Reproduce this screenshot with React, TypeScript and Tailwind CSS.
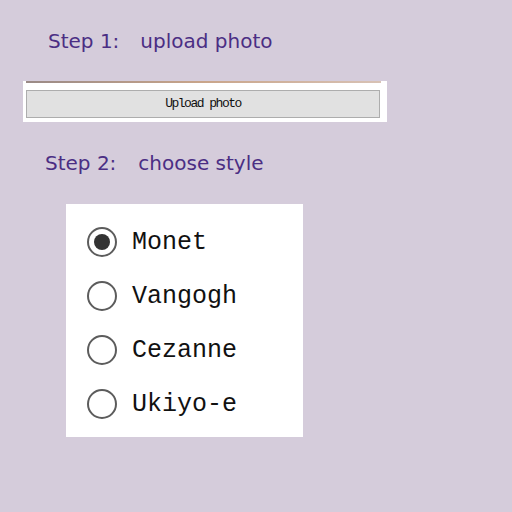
import React, { useState } from 'react';

const styles = ['Monet', 'Vangogh', 'Cezanne', 'Ukiyo-e'];

const App: React.FC = () => {
  const [picked, setPicked] = useState('Monet');

  return (
    <div className="w-[512px] h-[512px] bg-[#d5ccdb] pt-[29px] flex flex-col items-start font-['DejaVu_Sans',Verdana,sans-serif]">
      <div className="ml-[48px] text-[20px] leading-[24px] text-[#4b2e84] flex">
        <span>Step 1:</span>
        <span className="ml-[21px]">upload photo</span>
      </div>

      <div className="mt-[28px] ml-[23px] w-[364px] h-[41px] bg-white flex flex-col">
        <div className="ml-[3px] w-[355px] h-[2px] bg-gradient-to-r from-[#9a8a86] via-[#c9a58a] to-[#d8c2b5]" />
        <button className="mt-[7px] ml-[3px] w-[354px] h-[28px] bg-[#e1e1e1] border border-[#adadad] flex items-center justify-center font-['Liberation_Mono',monospace] text-[13px] tracking-[-1.5px] text-[#111]">
          Upload photo
        </button>
      </div>

      <div className="mt-[29px] ml-[45px] text-[20px] leading-[24px] text-[#4b2e84] flex">
        <span>Step 2:</span>
        <span className="ml-[22px]">choose style</span>
      </div>

      <div className="mt-[29px] ml-[66px] w-[237px] h-[233px] bg-white pt-[11px] pl-[21px] flex flex-col">
        {styles.map((s) => (
          <label key={s} className="h-[54px] flex items-center gap-[15px] cursor-pointer" onClick={() => setPicked(s)}>
            <span className="w-[30px] h-[30px] rounded-full border-2 border-[#5c5c5c] flex items-center justify-center">
              {picked === s && <span className="w-[16px] h-[16px] rounded-full bg-[#333]" />}
            </span>
            <span className="font-['Liberation_Mono',monospace] text-[25px] leading-none text-[#111]">{s}</span>
          </label>
        ))}
      </div>
    </div>
  );
};

export default App;
